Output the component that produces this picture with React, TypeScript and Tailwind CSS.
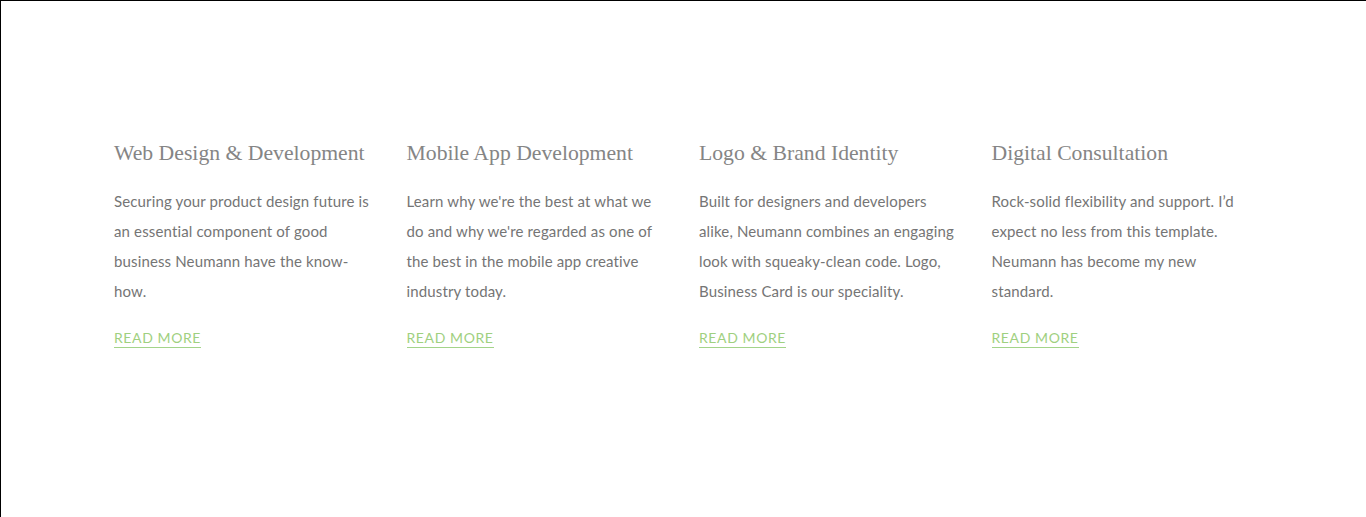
const services = [
  {
    title: "Web Design & Development",
    text: "Securing your product design future is an essential component of good business Neumann have the know-how.",
  },
  {
    title: "Mobile App Development",
    text: "Learn why we're the best at what we do and why we're regarded as one of the best in the mobile app creative industry today.",
  },
  {
    title: "Logo & Brand Identity",
    text: "Built for designers and developers alike, Neumann combines an engaging look with squeaky-clean code. Logo, Business Card is our speciality.",
  },
  {
    title: "Digital Consultation",
    text: "Rock-solid flexibility and support. I\u2019d expect no less from this template. Neumann has become my new standard.",
  },
];

export default function App() {
  return (
    <div className="min-h-[517px] border-t border-l border-black bg-white">
      <section className="pt-[137px] pb-20 pl-px">
        <div className="mx-auto grid w-[1170px] grid-cols-4">
          {services.map((service) => (
            <article key={service.title} className="px-[15px]">
              <h3 className="font-['Liberation_Serif',serif] text-[21.7px] leading-[30px] font-normal whitespace-nowrap text-[#858585]">
                {service.title}
              </h3>
              <p className="mt-[18px] font-['Lato',sans-serif] text-[15px] leading-[30px] tracking-[0.14px] text-[#757575]">
                {service.text}
              </p>
              <a
                href="#"
                className="mt-[23px] inline-block border-b border-[#a3d48a] font-['Lato',sans-serif] text-[14px] leading-[18px] tracking-[0.6px] text-[#9fd07f] uppercase"
              >
                Read More
              </a>
            </article>
          ))}
        </div>
      </section>
    </div>
  );
}
